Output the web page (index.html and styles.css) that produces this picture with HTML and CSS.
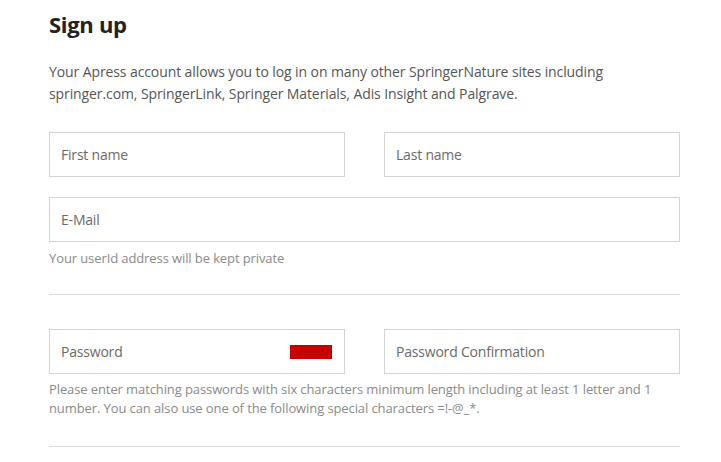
FILE: index.html
```html
<!DOCTYPE html>
<html>
<head>
<meta charset="utf-8">
<link rel="stylesheet" href="styles.css">
</head>
<body>
<div class="page">
  <h1 class="title">Sign up</h1>
  <p class="intro">Your Apress account allows you to log in on many other SpringerNature sites including springer.com, SpringerLink, Springer Materials, Adis Insight and Palgrave.</p>
  <div class="row">
    <div class="field"><span class="ph">First name</span></div>
    <div class="field"><span class="ph">Last name</span></div>
  </div>
  <div class="field wide"><span class="ph">E-Mail</span></div>
  <p class="help">Your userId address will be kept private</p>
  <hr class="divider first">
  <div class="row pwrow">
    <div class="field"><span class="ph">Password</span><span class="strength"></span></div>
    <div class="field"><span class="ph">Password Confirmation</span></div>
  </div>
  <p class="help pw">Please enter matching passwords with six characters minimum length including at least 1 letter and 1 number. You can also use one of the following special characters =!-@_*.</p>
  <hr class="divider second">
</div>
</body>
</html>
```
FILE: styles.css
```css
html, body {
  margin: 0;
  padding: 0;
  background: #fff;
}
.page {
  width: 631px;
  padding: 9px 0 0 49px;
  font-family: "Open Sans", "Noto Sans", sans-serif;
  color: #333;
}
.title {
  margin: 0;
  font-size: 22px;
  line-height: 30px;
  font-weight: 700;
  color: #222;
  letter-spacing: -0.3px;
}
.intro {
  margin: 22px 0 0;
  font-size: 14px;
  line-height: 22px;
  color: #555;
  letter-spacing: -0.1px;
}
.row {
  display: flex;
  gap: 39px;
  margin-top: 27px;
}
.row.pwrow {
  margin-top: 34px;
}
.field {
  box-sizing: border-box;
  width: 296px;
  height: 45px;
  border: 1px solid #d5d5d5;
  display: flex;
  align-items: center;
  justify-content: space-between;
  padding: 0 12px 0 11px;
}
.field.wide {
  width: 631px;
  margin-top: 20px;
}
.ph {
  font-size: 14px;
  color: #6a6a6a;
  letter-spacing: -0.2px;
}
.strength {
  width: 42px;
  height: 14px;
  background: #c80000;
}
.help {
  margin: 7px 0 0;
  font-size: 13px;
  line-height: 19px;
  color: #8a8a8a;
  letter-spacing: -0.1px;
}
.help.pw {
  margin-top: 6px;
}
.divider {
  border: 0;
  border-top: 1px solid #ddd;
  margin: 0;
}
.divider.first {
  margin-top: 26px;
}
.divider.second {
  margin-top: 28px;
}
```
